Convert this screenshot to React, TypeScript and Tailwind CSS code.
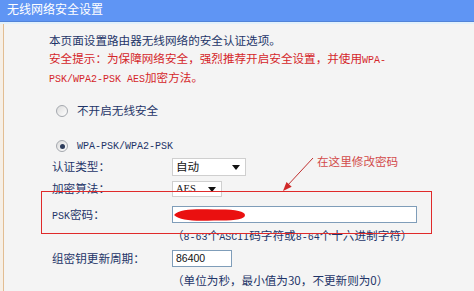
const CJK = "font-['Noto_Sans_CJK_SC',sans-serif]";

function M({ children }: { children: React.ReactNode }) {
  return <span className="font-['Liberation_Mono',monospace] text-[10px]">{children}</span>;
}

function Radio({ checked }: { checked?: boolean }) {
  return (
    <span className="w-[12px] h-[12px] rounded-full border border-[#a4a8ae] bg-gradient-to-br from-[#dcdcdc] to-[#ffffff] flex items-center justify-center">
      {checked && <span className="w-[5px] h-[5px] rounded-full bg-[#2e3d5c]" />}
    </span>
  );
}

function Arrow() {
  return (
    <svg width="8" height="5" viewBox="0 0 8 5">
      <polygon points="0,0 8,0 4,5" fill="#111" />
    </svg>
  );
}

export default function App() {
  return (
    <div className={`w-[474px] h-[291px] overflow-hidden bg-[#f4f4f4] relative ${CJK} text-[11.6px] text-[#1e3468]`}>
      <div className="h-[22px] bg-[#5f95f4] border-b border-[#5283d8] text-white text-[12px] pl-[7px] leading-[18px]">无线网络安全设置</div>
      <div className="h-[2px] bg-[#e2f1fc]" />

      <div className="flex h-[267px]">
        <div className="w-[3px] bg-[#f6efe6]" />
        <div className="w-px bg-[#e2bd92]" />
        <div className="flex-1 pl-[45px] pt-[8px] whitespace-nowrap">
          <div className="leading-[17.5px]">本页面设置路由器无线网络的安全认证选项。</div>
          <div className="leading-[17.5px] text-[#d4262a]">
            安全提示：为保障网络安全，强烈推荐开启安全设置，并使用<M>WPA-</M>
            <br />
            <M>PSK/WPA2-PSK AES</M>加密方法。
          </div>

          <div className="mt-[13.5px] h-[18px] flex items-center pl-[7px] gap-[9px]">
            <Radio />
            <span>不开启无线安全</span>
          </div>
          <div className="mt-[17px] h-[18px] flex items-center pl-[7px] gap-[9px]">
            <Radio checked />
            <M>WPA-PSK/WPA2-PSK</M>
          </div>

          <div className="mt-[3px] h-[18px] flex items-center pl-[3px]">
            <span className="w-[120px]">认证类型：</span>
            <div className="w-[74px] h-[18px] bg-white border border-[#cfcfcf] flex items-center justify-between pl-[3px] pr-[5px] text-[#111]">
              <span>自动</span>
              <Arrow />
            </div>
          </div>
          <div className="mt-[5px] h-[16px] flex items-center pl-[3px]">
            <span className="w-[120px]">加密算法：</span>
            <div className="w-[50px] h-[16px] bg-white border border-[#cfcfcf] flex items-center justify-between pl-[3px] pr-[5px] text-[#111]">
              <span className="font-['Liberation_Serif',serif] text-[10.5px]">AES</span>
              <Arrow />
            </div>
          </div>
          <div className="mt-[9px] h-[17px] flex items-center pl-[3px]">
            <span className="w-[120px]">
              <M>PSK</M>密码：
            </span>
            <div className="relative w-[245px] h-[17px] bg-white border border-[#7f9db9]">
              <svg className="absolute left-[1px] top-[1px]" width="72" height="14" viewBox="0 0 72 14">
                <path d="M0 7 C6 1 20 1 40 1.5 C60 1 71 3 71 7 C71 11.5 60 13 40 12.5 C20 13 6 13 0 7 Z" fill="#ea1010" />
              </svg>
            </div>
          </div>
          <div className="mt-[5px] h-[14px] leading-[14px] pl-[123px]">
            （<M>8-63</M>个<M>ASCII</M>码字符或<M>8-64</M>个十六进制字符）
          </div>
          <div className="mt-[8px] h-[17px] flex items-center pl-[3px]">
            <span className="w-[120px]">组密钥更新周期：</span>
            <div className="w-[60px] h-[17px] bg-white border border-[#7f9db9] flex items-center pl-[3px] text-[#111]">
              <span className="font-['Liberation_Sans',sans-serif] text-[10.5px]">86400</span>
            </div>
          </div>
          <div className="mt-[6px] h-[14px] leading-[14px] pl-[123px]">（单位为秒，最小值为30，不更新则为0）</div>
        </div>
      </div>

      <div className="absolute left-[317px] top-[153px] leading-[17px] text-[#d24a4a]">在这里修改密码</div>
      <svg className="absolute left-0 top-0 pointer-events-none" width="474" height="291">
        <rect x="41.5" y="191.5" width="390" height="42" fill="none" stroke="#e02a2a" strokeWidth="1" />
        <line x1="313" y1="158" x2="287" y2="186" stroke="#c03030" strokeWidth="1" />
        <polygon points="283,191 291.7,186.8 286.5,182" fill="#d02828" />
      </svg>
    </div>
  );
}
